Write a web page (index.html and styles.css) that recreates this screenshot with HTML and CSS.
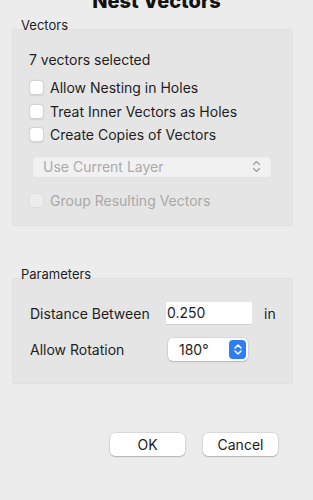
FILE: index.html
```html
<!DOCTYPE html>
<html lang="en">
<head>
    <meta charset="UTF-8">
    <meta name="viewport" content="width=device-width, initial-scale=1.0">
    <title>Nest Vectors</title>
    <link rel="stylesheet" href="styles.css">
</head>
<body>

<div class="dialog">
    <h1 class="title">Nest Vectors</h1>

    <!-- Vectors group -->
    <section class="group">
        <div class="group-label">Vectors</div>
        <div class="group-box vectors-box">
            <p class="info">7 vectors selected</p>
            <label class="check"><span class="box"></span>Allow Nesting in Holes</label>
            <label class="check"><span class="box"></span>Treat Inner Vectors as Holes</label>
            <label class="check"><span class="box"></span>Create Copies of Vectors</label>
            <div class="popup popup-disabled">
                <span>Use Current Layer</span>
                <svg class="chevrons" width="9" height="13" viewBox="0 0 9 13">
                    <path d="M1.5 4.5 L4.5 1.5 L7.5 4.5 M1.5 8.5 L4.5 11.5 L7.5 8.5" fill="none" stroke="#9a9a9a" stroke-width="1.1" stroke-linecap="round" stroke-linejoin="round"/>
                </svg>
            </div>
            <label class="check disabled"><span class="box"></span>Group Resulting Vectors</label>
        </div>
    </section>

    <!-- Parameters group -->
    <section class="group params">
        <div class="group-label">Parameters</div>
        <div class="group-box params-box">
            <div class="param-row">
                <span class="param-label">Distance Between</span>
                <span class="field">0.250</span>
                <span class="unit">in</span>
            </div>
            <div class="param-row">
                <span class="param-label">Allow Rotation</span>
                <span class="popup popup-small">
                    <span>180°</span>
                    <span class="stepper">
                        <svg width="10" height="13" viewBox="0 0 10 13">
                            <path d="M2 5 L5 2 L8 5 M2 8 L5 11 L8 8" fill="none" stroke="#fff" stroke-width="1.5" stroke-linecap="round" stroke-linejoin="round"/>
                        </svg>
                    </span>
                </span>
            </div>
        </div>
    </section>

    <div class="actions">
        <button class="btn">OK</button>
        <button class="btn">Cancel</button>
    </div>
</div>

</body>
</html>
```

FILE: styles.css
```css
body {
    margin: 0;
    background-color: #ececec;
    font-family: Inter, "Liberation Sans", sans-serif;
    color: #1e1e1e;
    overflow: hidden;
}
.dialog {
    height: 500px;
}
.title {
    margin: -11px 0 0 0;
    font-size: 20px;
    line-height: 24px;
    font-weight: 800;
    text-align: center;
    color: #111;
}
.group {
    margin: 0 20px 0 12px;
}
.group-label {
    font-size: 13px;
    line-height: 16px;
    padding-left: 9px;
    margin-top: 4px;
    margin-bottom: -4px;
}
.group-box {
    background-color: #e5e5e5;
    border: 1px solid #e0e0e0;
    border-radius: 2px;
}
.vectors-box {
    padding: 20px 0 0 16px;
    box-sizing: border-box;
    height: 197px;
}
.info {
    margin: 0;
    font-size: 14px;
    line-height: 20px;
}
.check {
    display: flex;
    align-items: center;
    height: 23.5px;
    font-size: 14px;
}
.info + .check {
    margin-top: 6px;
}
.check .box {
    width: 13px;
    height: 13px;
    margin-right: 6px;
    background-color: #fff;
    border: 1px solid #d3d3d3;
    border-radius: 4px;
    box-shadow: 0 0.5px 1px rgba(0, 0, 0, 0.08);
}
.check.disabled {
    color: #a9a9a9;
    height: 23px;
}
.check.disabled .box {
    background-color: #ececec;
    border-color: #dedede;
    box-shadow: none;
}
.popup {
    display: flex;
    align-items: center;
    justify-content: space-between;
    box-sizing: border-box;
    border-radius: 5px;
}
.popup-disabled {
    width: 240px;
    height: 22px;
    margin: 9px 0 11px 3px;
    padding: 0 10px 0 10px;
    background-color: #f1f1f1;
    border: 1px solid #e2e2e2;
    color: #ababab;
    font-size: 14px;
}
.chevrons {
    display: block;
}
.params {
    margin-top: 40px;
}
.params-box {
    height: 106px;
    box-sizing: border-box;
    padding: 23px 0 0 17px;
}
.param-row {
    display: flex;
    align-items: center;
    height: 23px;
    font-size: 14px;
}
.param-row + .param-row {
    margin-top: 13px;
}
.param-label {
    width: 136px;
}
.field {
    box-sizing: border-box;
    width: 86px;
    height: 23px;
    line-height: 22px;
    padding-left: 1px;
    background-color: #fff;
    border-bottom: 1px solid #d0d0d0;
}
.unit {
    margin-left: 12px;
}
.popup-small {
    width: 80px;
    height: 23px;
    margin-left: 2px;
    padding: 0 2px 0 11px;
    background-color: #fff;
    box-shadow: 0 0 0 0.5px rgba(0, 0, 0, 0.12), 0 1px 1.5px rgba(0, 0, 0, 0.15);
}
.stepper {
    display: flex;
    align-items: center;
    justify-content: center;
    width: 17px;
    height: 19px;
    background-color: #2f7df6;
    border-radius: 4px;
}
.actions {
    display: flex;
    justify-content: flex-end;
    gap: 18px;
    margin: 49px 35px 0 0;
}
.btn {
    width: 75px;
    height: 23px;
    padding: 0;
    font-family: Inter, "Liberation Sans", sans-serif;
    font-size: 14px;
    color: #1a1a1a;
    background-color: #fff;
    border: none;
    border-radius: 5px;
    box-shadow: 0 0 0 0.5px rgba(0, 0, 0, 0.15), 0 1px 1.5px rgba(0, 0, 0, 0.18);
}
```
